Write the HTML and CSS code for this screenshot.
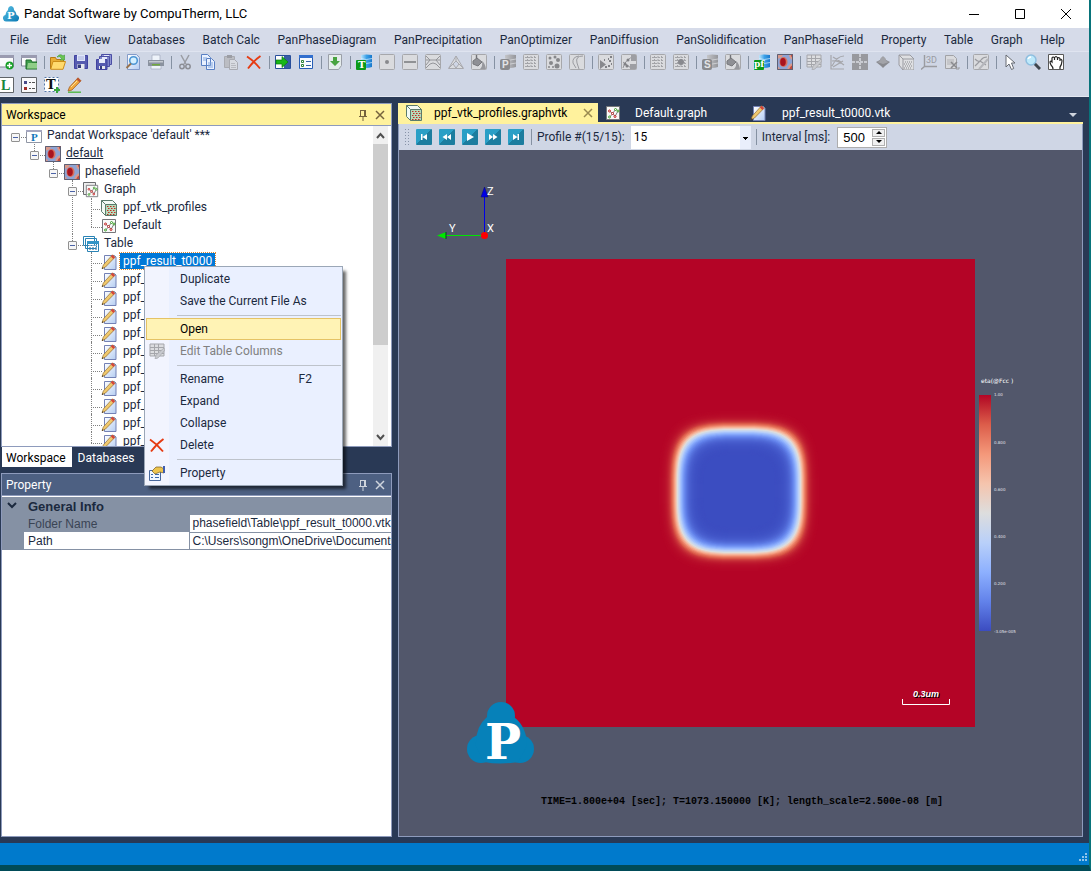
FILE: index.html
```html
<!DOCTYPE html>
<html lang="en">
<head>
<meta charset="utf-8">
<title>Pandat Software by CompuTherm, LLC</title>
<link rel="stylesheet" href="styles.css">
</head>
<body>
<svg class="defs" aria-hidden="true">
  <defs>
    <linearGradient id="gLogo" x2="1" y2="1"><stop offset="0" stop-color="#5cc0e4"/><stop offset="1" stop-color="#0879b4"/></linearGradient>
    <linearGradient id="gDb"><stop offset="0" stop-color="#bfe6fb"/><stop offset=".5" stop-color="#3aa0e8"/><stop offset="1" stop-color="#1878cc"/></linearGradient>
    <linearGradient id="gDbOff"><stop offset="0" stop-color="#c4c5c9"/><stop offset="1" stop-color="#95969b"/></linearGradient>
    <linearGradient id="gPage" x2="1" y2="1"><stop offset="0" stop-color="#fff"/><stop offset="1" stop-color="#b4cdf2"/></linearGradient>
    <linearGradient id="gPen" x2="1" y2="1"><stop offset="0" stop-color="#fff0a8"/><stop offset="1" stop-color="#e0a030"/></linearGradient>
  </defs>
  <symbol id="i-logo" viewBox="0 0 16 16"><path d="M8 0a4 4 0 0 1 3 4q2.500 2 2.600 5a3.300 3.300 0 0 1-1.600 6.400H4A3.300 3.300 0 0 1 2.400 9Q2.500 6 5 4a4 4 0 0 1 3-4z" fill="url(#gLogo)"/></symbol>
  <symbol id="i-newgraph" viewBox="0 0 16 16"><path d="M0 1.500h15.500V13H0z" fill="#fafbfc" stroke="#85879a"/><path d="M0 1h16v3H0z" fill="#9a9bb0"/><circle cx="11.500" cy="11.500" r="4" fill="#19a028"/><path d="M11.500 9v5M9 11.500h5" stroke="#fff" stroke-width="1.400"/></symbol>
  <symbol id="i-newfolder" viewBox="0 0 16 16"><path d="M.5 1.500h14.800V12H.5z" fill="#fafbfc" stroke="#85879a"/><path d="M0 1h16v3H0z" fill="#9a9bb0"/><path d="M5 6h5l1 2h5v7H5z" fill="#3f9c4b" stroke="#1e6c2b"/><path d="M7 9h9v5.500H6z" fill="#8fce88"/></symbol>
  <symbol id="i-open" viewBox="0 0 16 16"><path d="M.5 15V3.500h5l1 2h7V8" fill="#e8ad35" stroke="#b67a16"/><path d="M.7 15.300 3 7.500h12.500L13 15.300z" fill="#ffda6e" stroke="#cc8d19"/><path d="M7 3Q10-1 13 2l1.500-1v5H10l1.500-1.500Q10 1.500 7 3z" fill="#6bc552" stroke="#3c9b34" stroke-width=".6"/></symbol>
  <symbol id="i-save" viewBox="0 0 16 16"><path d="M1.500 1.500h13v13h-13z" fill="#565bb0" stroke="#4143a0"/><path d="M4 1h8v6H4z" fill="#dfe5fb"/><path d="M5 3h6M5 5h6" stroke="#a7b0da"/><path d="M4.500 10h7v5h-7z" fill="#e6e8ec"/><path d="M5 10.500h3V14H5z" fill="#353c80"/></symbol>
  <symbol id="i-saveall" viewBox="0 0 16 16"><path d="M5.500.5h10v10h-10z" fill="#8f95d2" stroke="#4b4ea5"/><path d="M8 1h5v3H8z" fill="#e4e8fa"/><path d="M3.500 2.500h10v10h-10z" fill="#7f86ca" stroke="#4b4ea5"/><path d="M6 3h5v3H6z" fill="#e4e8fa"/><path d="M.5 5.500h10.500v10H.5z" fill="#565bb0" stroke="#4143a0"/><path d="M3 5h6v4H3z" fill="#e8ecfb"/><path d="M3 12h6v3H3z" fill="#e6e8ec"/><path d="M4 12h2v3H4z" fill="#353c80"/></symbol>
  <symbol id="i-preview" viewBox="0 0 16 16"><path d="M2.500.5h9l3 3v12h-12z" fill="url(#gPage)" stroke="#839bc9"/><circle cx="8.500" cy="6.500" r="3.800" fill="#d5f0ff" stroke="#4d96d4" stroke-width="1.600"/><path d="M6 9.500 1.500 14" stroke="#98724c" stroke-width="2"/></symbol>
  <symbol id="i-print" viewBox="0 0 16 16"><path d="M4 1h8v6H4zM3 10h10v5H3z" fill="#eef3fa" stroke="#a0aabb" stroke-width=".7"/><path d="M0 6h16v6H0z" fill="#8a929f"/><path d="M1 7h14v1.500H1z" fill="#c4c9d0"/><path d="M4 10h8v1.500H4z" fill="#71a83e"/></symbol>
  <symbol id="i-cut" viewBox="0 0 16 16"><path d="M4 1l5 9M12 1 7 10" stroke="#9a9ca3" stroke-width="1.500"/><circle cx="5" cy="12.500" r="2.200" fill="none" stroke="#8c8e95" stroke-width="1.500"/><circle cx="11" cy="12.500" r="2.200" fill="none" stroke="#8c8e95" stroke-width="1.500"/></symbol>
  <symbol id="i-copy" viewBox="0 0 16 16"><path d="M1.500.5h6l3 3v8h-9zM6.500 4.500h5l3 3v8h-8z" fill="#e9f1ff" stroke="#5980c4"/><path d="M3 4h4M3 6h3M8 9h5M8 11h5M8 13h5" stroke="#82a6dd"/></symbol>
  <symbol id="i-paste" viewBox="0 0 16 16"><path d="M1.500 2.500h10v11h-10z" fill="#bbbdc3" stroke="#a8aab1"/><path d="M4 1h5v3H4z" fill="#9b9da4"/><path d="M6.500 5.500h5l3 3v7h-8z" fill="#d8dbe1" stroke="#a8aab1"/><path d="M8 9.500h4M8 11.500h5M8 13.500h5" stroke="#b8bac0"/></symbol>
  <symbol id="i-delete" viewBox="0 0 16 16"><path d="M1 2.500Q8 7 14 14.500M14.500 2Q8 6.500 2 14.500" fill="none" stroke="#e63b12" stroke-width="1.900"/></symbol>
  <symbol id="i-run" viewBox="0 0 16 16"><path d="M.5 1.500h15v13H.5z" fill="#fff" stroke="#294f9b"/><path d="M9 2h6v12H9z" fill="#365ea4"/><path d="M1 6h6V2.500L13 8l-6 5.500V10H1z" fill="#18b718" stroke="#087c0b" stroke-width=".7"/></symbol>
  <symbol id="i-props" viewBox="0 0 16 16"><path d="M1.500 1.500h13v13h-13z" fill="#f7faff" stroke="#255db6"/><path d="M1 1h14v3H1z" fill="#326fce"/><path d="M3.500 6.500h2v2h-2zM3.500 10.500h2v2h-2z" fill="#fff" stroke="#2b8137"/><path d="M8 7.500h5M8 11.500h5" stroke="#3464a7"/></symbol>
  <symbol id="i-import" viewBox="0 0 16 16"><path d="M1.500.5h13v11l-3 4h-10z" fill="#e5ecec" stroke="#9a9fa8"/><path d="M6 3h4v4h3l-5 5-5-5h3z" fill="#48a340"/></symbol>
  <symbol id="i-db" viewBox="0 0 16 16"><path d="M5 1q5-1 11 0v12q-6 2-11 0z" fill="url(#gDb)"/><path d="M5 4.500q5 2 11 0M5 8.500q5 2 11 0" fill="none" stroke="#d7f1ff" stroke-width=".7"/><rect y="6" width="10" height="10" rx="1" fill="#0a9a17"/></symbol>
  <symbol id="i-dboff" viewBox="0 0 16 16"><path d="M5 1q5-1 11 0v12q-6 2-11 0z" fill="url(#gDbOff)"/><path d="M5 5q5 2 11 0M5 9q5 2 11 0" fill="none" stroke="#dedfe3" stroke-width=".7"/><rect y="5" width="10" height="11" rx="2" fill="#898a8e"/></symbol>
  <symbol id="i-frame" viewBox="0 0 16 16"><rect x=".5" y=".5" width="15" height="15" rx="1" fill="#dadbde" stroke="#a6a7ab"/></symbol>
  <symbol id="i-point" viewBox="0 0 16 16"><use href="#i-frame"/><circle cx="8" cy="8" r="2" fill="#88898d"/></symbol>
  <symbol id="i-line" viewBox="0 0 16 16"><use href="#i-frame"/><path d="M2 8h12" stroke="#88898d" stroke-width="1.800"/></symbol>
  <symbol id="i-section" viewBox="0 0 16 16"><use href="#i-frame"/><path d="M1 2 5 6h6l4-4M1 6l4 0-4 5M15 6h-4l4 5M1 14l4-4q3-2 6 0l4 4" fill="none" stroke="#94959a"/></symbol>
  <symbol id="i-tri" viewBox="0 0 16 16"><path d="M8 2 15.500 14.500H.5zM8 2v5L5 10l3 4 3-4-3-3M5 10l-4 4M11 10l4 4" fill="#d9dbdf" stroke="#a8a9ae"/></symbol>
  <symbol id="i-bucket" viewBox="0 0 16 16"><use href="#i-frame"/><path d="M5.500 1v6" stroke="#707176" stroke-width="1.400"/><path d="M2 7l4-3 5 4-4 4-5-2z" fill="#8f9095" stroke="#77787c"/><path d="M11 7q3 2 4 8H9q3-3 2-8z" fill="#97989d"/></symbol>
  <symbol id="i-grid" viewBox="0 0 16 16"><use href="#i-frame"/><path d="M2 3.500h12M2 6.500h12M2 9.500h12M2 12.500h12M4.500 2v12M8 2v12M11.500 2v12" stroke="#a3a4a8" stroke-dasharray="2 1"/></symbol>
  <symbol id="i-dots" viewBox="0 0 16 16"><use href="#i-frame"/><g fill="#86878b"><circle cx="4" cy="4" r="1.500"/><circle cx="9" cy="3" r="1.500"/><circle cx="12" cy="6" r="2"/><circle cx="5" cy="9" r="2"/><circle cx="11" cy="12" r="2.500"/><circle cx="3" cy="13" r="1"/><circle cx="7" cy="13" r="1"/></g></symbol>
  <symbol id="i-contour" viewBox="0 0 16 16"><use href="#i-frame"/><path d="M14 2Q6 2 8 9l2 6M10 2Q3 3 4 9l3 5" fill="none" stroke="#9a9ba0"/></symbol>
  <symbol id="i-scatter" viewBox="0 0 16 16"><use href="#i-frame"/><path d="M2 6l6 4.500-6 4.500z" fill="#88898d"/><path d="M12 3h2M10 5h1M6 6h1M11 7h2M13 10h1M10 12h2M7 13h2" stroke="#808186" stroke-width="2"/></symbol>
  <symbol id="i-mesh" viewBox="0 0 16 16"><use href="#i-frame"/><path d="M2 14Q4 5 14 2M2 8l8 6" stroke="#909196" fill="none"/><path d="M10 1h5v6h-5zM9 10h6v5H9z" fill="#9d9ea3"/><g fill="#808185"><circle cx="4" cy="10" r="1.500"/><circle cx="7" cy="6" r="1.500"/><circle cx="6" cy="12" r="1.500"/></g></symbol>
  <symbol id="i-gridspot" viewBox="0 0 16 16"><use href="#i-grid"/><circle cx="8" cy="8" r="3" fill="#88898e"/></symbol>
  <symbol id="i-phase" viewBox="0 0 16 16"><path d="M0 0h16v16H0z" fill="#8fa4d4"/><path d="M0 0h6Q6 4 0 5zM12 0h4v6q-4-1-4-6zM16 9v7h-6q1-6 6-7zM0 12q3 1 3 4H0z" fill="#d99a8c"/><path d="M13.500 0H16v4q-2-1-2.500-4zM16 11v5h-4q1-4 4-5z" fill="#c24a3c"/><ellipse cx="6.500" cy="8" rx="4" ry="5" fill="#d9705c"/><ellipse cx="6" cy="8" rx="2.800" ry="4" fill="#a81420"/><path d="M.5.500h15v15H.5z" fill="none" stroke="#5c6076"/></symbol>
  <symbol id="i-tableedit" viewBox="0 0 16 16"><path d="M1 1h14v12H1z" fill="#dcdde0" stroke="#a5a6ab"/><path d="M1 4.500h14M1 7.500h14M1 10.500h14M5.500 1v12M9.500 1v12" stroke="#a5a6ab"/><path d="M15 5l1 2-7 8-3 1 1-4z" fill="#c8c9ce" stroke="#a0a1a6" stroke-width=".6"/></symbol>
  <symbol id="i-curves" viewBox="0 0 16 16"><path d="M2 1v14h13M3 12Q8 2 15 2M3 7q6-1 12 4M4 3l8 5M4 13 14 7" fill="none" stroke="#a5a6ab" stroke-width="1.200"/></symbol>
  <symbol id="i-quad" viewBox="0 0 16 16"><path d="M0 0h16v16H0z" fill="#98999e"/><path d="M8 0v16M0 8h16" stroke="#c9cbd1" stroke-width="2" stroke-dasharray="3 1"/></symbol>
  <symbol id="i-surface" viewBox="0 0 16 16"><path d="M1 8 5 6l3-4 3 4 4 2-5 4-2 2-2-2z" fill="#898a8f"/><path d="M5 7q0-4 3-4t3 4l3 1-6 2-6-2z" fill="#a3a4a9"/></symbol>
  <symbol id="i-cubeoff" viewBox="0 0 16 16"><path d="M1 1h11l4 4v11H5l-4-5z" fill="#dedfe2" stroke="#999aa0"/><path d="M1 1l4 4h11M5 5v11" fill="none" stroke="#999aa0"/><path d="M7 8h8M6 10h8M7 12h8M6 14h8" stroke="#888a8e" stroke-dasharray="1 1"/></symbol>
  <symbol id="i-axes3d" viewBox="0 0 16 16"><path d="M3.500 1v11.500H16M3.500 12.500 0 15.500" fill="none" stroke="#9a9ba0" stroke-width="1.400"/></symbol>
  <symbol id="i-docx" viewBox="0 0 16 16"><path d="M1.500 1.500h8l3 3v10h-11z" fill="#d9dadd" stroke="#a1a2a6"/><path d="M3 6h7M3 8h7M3 10h5" stroke="#b0b1b5"/><path d="M7 8l6 6M13 8l-6 6" stroke="#898a8e" stroke-width="1.600"/><path d="M15 13v2h-3" fill="none" stroke="#97989b"/></symbol>
  <symbol id="i-graphedit" viewBox="0 0 16 16"><use href="#i-frame"/><path d="M2 5q4 4 6 1t6-3M2 12l5-5 6 4" fill="none" stroke="#9a9ba0" stroke-width="1.200"/><path d="M15 5 8 13l-2 2" stroke="#b5b6bb" stroke-width="2"/></symbol>
  <symbol id="i-cursor" viewBox="0 0 16 16"><path d="M4 1v12l3-3 2.500 5.500 2.200-1L9.500 9H13z" fill="#fff" stroke="#666a72"/></symbol>
  <symbol id="i-zoom" viewBox="0 0 16 16"><path d="M9.500 9.500l5.500 5.500" stroke="#3f464e" stroke-width="3"/><circle cx="6" cy="6" r="5" fill="#bde9fb" stroke="#8ebedf" stroke-width="1.500"/><path d="M3 5q1-2 3-2" stroke="#fff" stroke-width="1.500" fill="none"/></symbol>
  <symbol id="i-hand" viewBox="0 0 16 16"><path d="M.5.500h15v15H.5z" fill="#fff" stroke="#585858"/><path d="M5 15q0-2-2-4Q1 7 3 7l1 1V4q1-2 2.500 0Q8 1 9.500 4q2-1 2.500 1 2 0 2 2-.3 4-2 6v2M6.500 4v2M9.500 4v2M12 5v2" fill="none" stroke="#222" stroke-width="1.200"/></symbol>
  <symbol id="i-l" viewBox="0 0 16 16"><path d="M.5.500h15v15H.5z" fill="#fff" stroke="#606469"/></symbol>
  <symbol id="i-legend" viewBox="0 0 16 16"><path d="M.5.500h15v15H.5z" fill="#f9f9fb" stroke="#606469"/><path d="M3 4h3v3H3z" fill="#494b89"/><path d="M3 10h3v3H3z" fill="#a12c27"/><path d="M8 5.500h2M11 5.500h3M8 11.500h2M11 11.500h3" stroke="#555"/></symbol>
  <symbol id="i-text" viewBox="0 0 16 16"><path d="M.5.500h14v14H.5z" fill="#fff" stroke="#5579aa" stroke-dasharray="2 2"/><path d="M13 10v6M10 13h6" stroke="#35a43d" stroke-width="2"/></symbol>
  <symbol id="i-pencil" viewBox="0 0 16 16"><path d="M1 15.200h13" stroke="#51b745" stroke-width="1.400"/><path d="M11 .8l3 3L5 13l-4 1 1.500-4z" fill="#f0a83c" stroke="#a35f26" stroke-width=".8"/><path d="M11 .8l3 3-1.500 1.500L9.500 2.300z" fill="#bd5234"/><path d="M4 10l6-6" stroke="#fde09a"/></symbol>
  <symbol id="i-note" viewBox="0 0 16 16"><path d="M3.500 1.500h10l1.500 1.500v12.500H3.500z" fill="url(#gPage)" stroke="#7381b5"/><path d="M11.500.8l2.500 2.500L4.500 13 1 14.700 2.300 11z" fill="url(#gPen)" stroke="#8f6b32" stroke-width=".7"/><path d="M11.500.8l2.500 2.500-1.700 1.700L9.800 2.500z" fill="#d5463c"/><path d="M1 14.700l.5-1.500 1 1z" fill="#111"/></symbol>
  <symbol id="i-cube" viewBox="0 0 16 16"><path d="M.5.500h11l4 4v11h-11l-4-4z" fill="#f2faf4" stroke="#5b7b6b"/><path d="M.5.500l4 4h11M4.500 4.500v11" fill="none" stroke="#5b7b6b"/><path d="M5 5h10v10H5z" fill="#b6dcba"/><path d="M6 6.500h9M7 8.500h8M6 10.500h9M7 12.500h8M6 14.500h9" stroke="#c22b22" stroke-dasharray="1.500 1.500"/></symbol>
  <symbol id="i-graph" viewBox="0 0 16 16"><path d="M1.500 1.500h13v13h-13z" fill="#f9f9f9" stroke="#75777a"/><path d="M4.500 12 8 8.500l2 3 3-5.500M4.500 6l3 2.500L11 4" fill="none" stroke="#222" stroke-width=".6"/><g fill="#fff" stroke-width="1"><g stroke="#c32020"><circle cx="4.500" cy="6" r="1"/><circle cx="7.500" cy="8.500" r="1"/><circle cx="10" cy="11.500" r="1"/></g><g stroke="#3b9e29"><circle cx="4.500" cy="12" r="1"/><circle cx="10.500" cy="4.500" r="1"/><circle cx="13" cy="6" r="1"/></g></g></symbol>
  <symbol id="i-graphs" viewBox="0 0 16 16"><path d="M.5.500h12v12H.5z" fill="#eee" stroke="#6b6d70"/><use href="#i-graph" x="2" y="2" width="14" height="14"/></symbol>
  <symbol id="i-tables" viewBox="0 0 16 16"><path d="M.5.500h11v9H.5zM2.500 2.500h11v10h-11zM4.500 5.500h11v10h-11z" fill="#fff" stroke="#2a83b5"/><path d="M4 5h12v3H4z" fill="#3294c6"/><path d="M6 9.500h9M6 11.500h9M6 13.500h9" stroke="#8fb0c8" stroke-dasharray="2 1"/></symbol>
  <symbol id="i-workspace" viewBox="0 0 16 16"><path d="M.5 2.500h15v12H.5z" fill="#fff" stroke="#9096a5"/><path d="M0 2h16v2H0z" fill="#a5a7c0"/></symbol>
  <symbol id="i-propsheet" viewBox="0 0 16 16"><path d="M.5 5.500h11v10H.5z" fill="#f1f7ff" stroke="#48679b"/><path d="M2 9.500h2M2 12.500h2M6 9.500h4M6 12.500h4" stroke="#3c68ab"/><path d="M3 6l4-4h5l3 2v4l-4-1-5 2z" fill="#edc44e" stroke="#735a22" stroke-width=".7"/><path d="M14 1h2v7h-2z" fill="#3f5daf"/></symbol>
  <symbol id="i-pin" viewBox="0 0 10 12"><path d="M2.500 1v6M7.500 1v6M2.500 1.500h5M1 7.500h8M5 8v4M6.500 1v6" fill="none" stroke="currentColor"/></symbol>
  <symbol id="i-x" viewBox="0 0 10 10"><path d="M1 1l8 8M9 1l-8 8" stroke="currentColor" stroke-width="1.500"/></symbol>
  <symbol id="i-first" viewBox="0 0 16 16"><path d="M5 5h1.500v6H5zM11 5v6L6.500 8z" fill="#fff"/></symbol>
  <symbol id="i-rew" viewBox="0 0 16 16"><path d="M8 5v6L3.500 8zM12 5v6L8 8z" fill="#fff"/></symbol>
  <symbol id="i-play" viewBox="0 0 16 16"><path d="M5 4l7 4-7 4z" fill="#fff"/></symbol>
  <symbol id="i-fwd" viewBox="0 0 16 16"><path d="M4 5v6l4-3zM8 5v6l4.500-3z" fill="#fff"/></symbol>
  <symbol id="i-last" viewBox="0 0 16 16"><path d="M9.500 5H11v6H9.500zM5 5v6l4.500-3z" fill="#fff"/></symbol>
</svg>

<div class="app">
  <header class="titlebar">
    <svg class="ico" viewBox="0 0 16 16"><use href="#i-logo"/><text class="logo-p" x="4" y="13">P</text></svg>
    <h1>Pandat Software by CompuTherm, LLC</h1>
    <div class="winbtns">
      <button aria-label="Minimize"><svg viewBox="0 0 12 12"><path d="M1 6.500h10" stroke="#000"/></svg></button>
      <button aria-label="Maximize"><svg viewBox="0 0 12 12"><path d="M1.500 1.500h9v9h-9z" fill="none" stroke="#000"/></svg></button>
      <button aria-label="Close"><svg viewBox="0 0 12 12"><path d="M1 1l10 10M11 1 1 11" stroke="#000"/></svg></button>
    </div>
  </header>

  <nav class="menubar">
    <button>File</button><button>Edit</button><button>View</button><button>Databases</button><button>Batch Calc</button><button>PanPhaseDiagram</button><button>PanPrecipitation</button><button>PanOptimizer</button><button>PanDiffusion</button><button>PanSolidification</button><button>PanPhaseField</button><button>Property</button><button>Table</button><button>Graph</button><button>Help</button>
  </nav>

  <div class="toolbars">
    <div class="toolbar">
      <button aria-label="New graph"><svg><use href="#i-newgraph"/></svg></button>
      <button aria-label="New workspace"><svg><use href="#i-newfolder"/></svg></button>
      <i class="sep"></i>
      <button aria-label="Open"><svg><use href="#i-open"/></svg></button>
      <button aria-label="Save"><svg><use href="#i-save"/></svg></button>
      <button aria-label="Save all"><svg><use href="#i-saveall"/></svg></button>
      <i class="sep"></i>
      <button aria-label="Print preview"><svg><use href="#i-preview"/></svg></button>
      <button aria-label="Print"><svg><use href="#i-print"/></svg></button>
      <i class="sep"></i>
      <button aria-label="Cut"><svg><use href="#i-cut"/></svg></button>
      <button aria-label="Copy"><svg><use href="#i-copy"/></svg></button>
      <button aria-label="Paste"><svg><use href="#i-paste"/></svg></button>
      <button aria-label="Delete"><svg><use href="#i-delete"/></svg></button>
      <i class="sep"></i>
      <button aria-label="Run"><svg><use href="#i-run"/></svg></button>
      <button aria-label="Options"><svg><use href="#i-props"/></svg></button>
      <i class="sep"></i>
      <button aria-label="Import"><svg><use href="#i-import"/></svg></button>
      <i class="sep"></i>
      <button aria-label="Load database"><svg viewBox="0 0 16 16"><use href="#i-db"/><text class="badge" x="2" y="14">T</text></svg></button>
      <button aria-label="Point calculation"><svg><use href="#i-point"/></svg></button>
      <button aria-label="Line calculation"><svg><use href="#i-line"/></svg></button>
      <button aria-label="Section calculation"><svg><use href="#i-section"/></svg></button>
      <button aria-label="Liquidus projection"><svg><use href="#i-tri"/></svg></button>
      <button aria-label="Solidification"><svg><use href="#i-bucket"/></svg></button>
      <i class="sep"></i>
      <button aria-label="Precipitation database"><svg viewBox="0 0 16 16"><use href="#i-dboff"/><text class="badge-off" x="2" y="14">P</text></svg></button>
      <button aria-label="Precipitation grid"><svg><use href="#i-grid"/></svg></button>
      <button aria-label="Precipitation simulation"><svg><use href="#i-dots"/></svg></button>
      <button aria-label="TTT simulation"><svg><use href="#i-contour"/></svg></button>
      <i class="sep"></i>
      <button aria-label="Optimizer"><svg><use href="#i-scatter"/></svg></button>
      <button aria-label="Optimizer results"><svg><use href="#i-mesh"/></svg></button>
      <i class="sep"></i>
      <button aria-label="Diffusion"><svg><use href="#i-grid"/></svg></button>
      <button aria-label="Diffusion spot"><svg><use href="#i-gridspot"/></svg></button>
      <i class="sep"></i>
      <button aria-label="Solidification database"><svg viewBox="0 0 16 16"><use href="#i-dboff"/><text class="badge-off" x="2" y="14">S</text></svg></button>
      <button aria-label="Solidification simulation"><svg><use href="#i-bucket"/></svg></button>
      <i class="sep"></i>
      <button aria-label="Phase field database"><svg viewBox="0 0 16 16"><use href="#i-db"/><text class="badge small" x="0" y="13">pf</text></svg></button>
      <button aria-label="Phase field simulation"><svg><use href="#i-phase"/></svg></button>
      <i class="sep"></i>
      <button aria-label="Edit table"><svg><use href="#i-tableedit"/></svg></button>
      <button aria-label="Plot curves"><svg><use href="#i-curves"/></svg></button>
      <button aria-label="Tile plots"><svg><use href="#i-quad"/></svg></button>
      <button aria-label="Surface plot"><svg><use href="#i-surface"/></svg></button>
      <button aria-label="Cube plot"><svg><use href="#i-cubeoff"/></svg></button>
      <button aria-label="3D plot"><svg viewBox="0 0 16 16"><use href="#i-axes3d"/><text class="t3d" x="5" y="9">3D</text></svg></button>
      <button aria-label="Export to Excel"><svg><use href="#i-docx"/></svg></button>
      <i class="sep"></i>
      <button aria-label="Edit graph"><svg><use href="#i-graphedit"/></svg></button>
      <i class="sep"></i>
      <button aria-label="Select"><svg><use href="#i-cursor"/></svg></button>
      <button aria-label="Zoom"><svg><use href="#i-zoom"/></svg></button>
      <button aria-label="Pan"><svg><use href="#i-hand"/></svg></button>
    </div>
    <div class="toolbar">
      <button aria-label="Label"><svg viewBox="0 0 16 16"><use href="#i-l"/><text class="tl" x="3" y="13">L</text></svg></button>
      <button aria-label="Legend"><svg><use href="#i-legend"/></svg></button>
      <button aria-label="Add text"><svg viewBox="0 0 16 16"><use href="#i-text"/><text class="tt" x="2" y="12">T</text></svg></button>
      <button aria-label="Draw line"><svg><use href="#i-pencil"/></svg></button>
    </div>
  </div>

  <main class="body">
    <aside class="left">
      <section class="panel workspace">
        <div class="panel-head active"><h2>Workspace</h2><button class="pin" aria-label="Pin"><svg><use href="#i-pin"/></svg></button><button class="close" aria-label="Close"><svg><use href="#i-x"/></svg></button></div>
        <div class="treebox">
          <ul class="tree">
            <li><div class="row"><button class="exp" aria-label="Collapse"></button><svg class="ico" viewBox="0 0 16 16"><use href="#i-workspace"/><text class="ws-p" x="5" y="13">P</text></svg><span>Pandat Workspace 'default' ***</span></div>
              <ul><li><div class="row"><button class="exp" aria-label="Collapse"></button><svg class="ico"><use href="#i-phase"/></svg><span class="current">default</span></div>
                <ul><li><div class="row"><button class="exp" aria-label="Collapse"></button><svg class="ico"><use href="#i-phase"/></svg><span>phasefield</span></div>
                  <ul>
                    <li><div class="row"><button class="exp" aria-label="Collapse"></button><svg class="ico"><use href="#i-graphs"/></svg><span>Graph</span></div>
                      <ul>
                        <li><div class="row leaf"><svg class="ico"><use href="#i-cube"/></svg><span>ppf_vtk_profiles</span></div></li>
                        <li><div class="row leaf"><svg class="ico"><use href="#i-graph"/></svg><span>Default</span></div></li>
                      </ul></li>
                    <li><div class="row"><button class="exp" aria-label="Collapse"></button><svg class="ico"><use href="#i-tables"/></svg><span>Table</span></div>
                      <ul>
                        <li><div class="row leaf"><svg class="ico"><use href="#i-note"/></svg><span class="selected">ppf_result_t0000</span></div></li>
                        <li><div class="row leaf"><svg class="ico"><use href="#i-note"/></svg><span>ppf_</span></div></li>
                        <li><div class="row leaf"><svg class="ico"><use href="#i-note"/></svg><span>ppf_</span></div></li>
                        <li><div class="row leaf"><svg class="ico"><use href="#i-note"/></svg><span>ppf_</span></div></li>
                        <li><div class="row leaf"><svg class="ico"><use href="#i-note"/></svg><span>ppf_</span></div></li>
                        <li><div class="row leaf"><svg class="ico"><use href="#i-note"/></svg><span>ppf_</span></div></li>
                        <li><div class="row leaf"><svg class="ico"><use href="#i-note"/></svg><span>ppf_</span></div></li>
                        <li><div class="row leaf"><svg class="ico"><use href="#i-note"/></svg><span>ppf_</span></div></li>
                        <li><div class="row leaf"><svg class="ico"><use href="#i-note"/></svg><span>ppf_</span></div></li>
                        <li><div class="row leaf"><svg class="ico"><use href="#i-note"/></svg><span>ppf_</span></div></li>
                        <li><div class="row leaf"><svg class="ico"><use href="#i-note"/></svg><span>ppf_</span></div></li>
                      </ul></li>
                  </ul></li></ul></li></ul></li>
          </ul>
          <div class="scroll"><svg viewBox="0 0 15 16"><path d="M4 10l3.500-4 3.500 4" fill="none" stroke="#505050" stroke-width="2"/></svg><div class="thumb"></div><svg viewBox="0 0 15 16"><path d="M4 6l3.500 4L11 6" fill="none" stroke="#505050" stroke-width="2"/></svg></div>
        </div>
      </section>
      <div class="docktabs"><button class="on">Workspace</button><button>Databases</button></div>

      <section class="panel property">
        <div class="panel-head"><h2>Property</h2><button class="pin" aria-label="Pin"><svg><use href="#i-pin"/></svg></button><button class="close" aria-label="Close"><svg><use href="#i-x"/></svg></button></div>
        <table class="grid">
          <colgroup><col class="c-gut"><col class="c-key"><col></colgroup>
          <tr class="group"><td class="gut"><svg viewBox="0 0 16 16"><path d="M4 5l4 4 4-4" fill="none" stroke="#1b293e" stroke-width="2"/></svg></td><th colspan="2">General Info</th></tr>
          <tr><td class="gut"></td><td class="key dim">Folder Name</td><td class="val">phasefield\Table\ppf_result_t0000.vtk</td></tr>
          <tr><td class="gut"></td><td class="key">Path</td><td class="val">C:\Users\songm\OneDrive\Documents</td></tr>
        </table>
      </section>

      <div class="ctx" role="menu">
        <button role="menuitem"><i></i><span>Duplicate</span></button>
        <button role="menuitem"><i></i><span>Save the Current File As</span></button>
        <hr>
        <button role="menuitem" class="hot"><i></i><span>Open</span></button>
        <button role="menuitem" disabled><i><svg><use href="#i-tableedit"/></svg></i><span>Edit Table Columns</span></button>
        <hr>
        <button role="menuitem"><i></i><span>Rename</span><kbd>F2</kbd></button>
        <button role="menuitem"><i></i><span>Expand</span></button>
        <button role="menuitem"><i></i><span>Collapse</span></button>
        <button role="menuitem"><i><svg><use href="#i-delete"/></svg></i><span>Delete</span></button>
        <hr>
        <button role="menuitem"><i><svg><use href="#i-propsheet"/></svg></i><span>Property</span></button>
      </div>
    </aside>

    <section class="doc">
      <div class="doctabs">
        <div class="tab on"><svg class="ico"><use href="#i-cube"/></svg><button>ppf_vtk_profiles.graphvtk</button><button class="close" aria-label="Close tab"><svg><use href="#i-x"/></svg></button></div>
        <div class="tab"><svg class="ico"><use href="#i-graph"/></svg><button>Default.graph</button></div>
        <div class="tab last"><svg class="ico"><use href="#i-note"/></svg><button>ppf_result_t0000.vtk</button></div>
        <button class="more" aria-label="More tabs"><svg viewBox="0 0 8 4"><path d="M0 0h8L4 4z" fill="#ced4dd"/></svg></button>
      </div>
      <div class="docbox">
        <div class="player">
          <i class="grip"></i>
          <button class="pl" aria-label="First"><svg><use href="#i-first"/></svg></button>
          <button class="pl" aria-label="Previous"><svg><use href="#i-rew"/></svg></button>
          <button class="pl" aria-label="Play"><svg><use href="#i-play"/></svg></button>
          <button class="pl" aria-label="Next"><svg><use href="#i-fwd"/></svg></button>
          <button class="pl" aria-label="Last"><svg><use href="#i-last"/></svg></button>
          <i class="sep"></i>
          <label for="profile">Profile #(15/15):</label>
          <select id="profile"><option>15</option></select>
          <i class="sep"></i>
          <label for="interval">Interval [ms]:</label>
          <div class="spin"><input id="interval" type="text" value="500"><div><button aria-label="Increase"><svg viewBox="0 0 6 3"><path d="M0 3h6L3 0z"/></svg></button><button aria-label="Decrease"><svg viewBox="0 0 6 3"><path d="M0 0h6L3 3z"/></svg></button></div></div>
        </div>
        <svg class="scene" viewBox="0 0 683 686" role="img" aria-label="Phase field result">
          <defs><linearGradient id="bar" x2="0" y2="1"><stop offset="0" stop-color="#b40426"/><stop offset=".03" stop-color="#bb1b2c"/><stop offset=".125" stop-color="#dc5d4a"/><stop offset=".25" stop-color="#f4987a"/><stop offset=".375" stop-color="#f5c4ad"/><stop offset=".5" stop-color="#dddddd"/><stop offset=".625" stop-color="#b9d0f9"/><stop offset=".75" stop-color="#8db0fe"/><stop offset=".875" stop-color="#6282ea"/><stop offset="1" stop-color="#3b4cc0"/></linearGradient></defs>
          <g class="axes">
            <path d="M85.500 85V45" stroke="#0000e6"/><path d="M82 47h7l-3.500-10z" fill="#0000e6" stroke="#08086e" stroke-width=".5"/>
            <path d="M85 85.500H46" stroke="#00e600"/><path d="M38 85.500l9-3.500v7z" fill="#00e600"/><path d="M47 82v7" stroke="#042"/>
            <circle cx="85.500" cy="85.500" r="3.500" fill="#f00"/>
            <text x="88" y="45">Z</text><text x="50" y="82">Y</text><text x="88" y="82">X</text>
          </g>
          <rect x="107" y="109" width="469" height="468" fill="#b40426"/>
          <g id="particle" transform="translate(340 341)"></g>
          <text class="lt" x="582" y="233">eta(@Fcc )</text>
          <rect x="580" y="245" width="12" height="236" fill="url(#bar)"/>
          <g class="tick"><text x="595" y="246">1.00</text><text x="595" y="294">0.800</text><text x="595" y="341">0.600</text><text x="595" y="388">0.400</text><text x="595" y="435">0.200</text><text x="595" y="483">-3.05e-005</text></g>
          <text class="scale" x="514" y="547">0.3um</text>
          <path d="M503.500 549v5.500h47V549" fill="none" stroke="#fff"/>
          <g fill="#0681b9"><circle cx="102" cy="566" r="14"/><circle cx="82" cy="599" r="14"/><circle cx="121" cy="599" r="14"/><path d="M88 567Q76 577 77 596l8 16q16 3 34 0l9-16q0-19-13-29z"/></g>
          <text class="biglogo" x="86" y="609">P</text>
          <text class="time" x="142" y="654">TIME=1.800e+04 [sec]; T=1073.150000 [K]; length_scale=2.500e-08 [m]</text>
        </svg>
      </div>
    </section>
  </main>
  <footer class="status"><svg viewBox="0 0 10 10"><path d="M8 0h2v2H8zM5 3h2v2H5zM8 3h2v2H8zM2 6h2v2H2zM5 6h2v2H5zM8 6h2v2H8z" fill="#8fc4ea"/></svg></footer>
</div>
<script src="scene.js"></script>
</body>
</html>
```
FILE: styles.css
```css
* { box-sizing: border-box; }
body { margin: 0; background: #004b58; color: #1b293e; font: 12px/18px Roboto, "Noto Sans", sans-serif; }
button, input, select { font: inherit; color: inherit; margin: 0; padding: 0; border: 0; background: none; white-space: nowrap; }
h1, h2 { margin: 0; font-size: 12px; font-weight: 400; white-space: nowrap; }
svg { display: block; }
.defs { position: absolute; width: 0; height: 0; }
.ico { width: 16px; height: 16px; flex: none; }
.app { display: flex; flex-direction: column; height: 100vh; min-height: 600px; border-right: 2px solid #08737a; border-bottom: 6px solid #004b58; }

.titlebar { display: flex; align-items: center; height: 28px; padding: 0 17px 0 3px; gap: 5px; background: #fff; color: #000; flex: none; }
.titlebar h1 { font-size: 13px; }
.winbtns { display: flex; gap: 34px; margin-left: auto; }
.winbtns svg { width: 12px; height: 12px; }
.menubar { display: flex; justify-content: space-between; height: 23px; padding: 0 24px 0 10px; background: #d6dbe9; flex: none; }
.toolbars { height: 46px; border-top: 1px solid #dfe4f0; border-bottom: 1px solid #e4e8f1; background: #cfd6e5; overflow: hidden; flex: none; padding-top: 2px; }
.toolbar { display: flex; gap: 7px; height: 23px; margin-left: -2px; }
.toolbar button, .toolbar svg { width: 16px; height: 16px; flex: none; }
.sep { width: 1px; height: 16px; background: #8591a2; flex: none; }
.toolbar .sep { height: 13px; margin: 2px -2px 0 0; }
.badge { font: 700 10px "DejaVu Serif", serif; fill: #fff; }
.badge.small { font-size: 9px; }
.badge-off { font: 700 10px "Liberation Sans", sans-serif; fill: #e2e3e6; }
.logo-p { font: 700 10px "DejaVu Serif", serif; fill: #fff; }
.ws-p { font: 700 11px "Liberation Serif", serif; fill: #1376ba; }
.tl { font: 700 14px "Liberation Serif", serif; fill: #18873a; }
.tt { font: 700 13px "DejaVu Serif", serif; fill: #111; }
.t3d { font: 9px Roboto, sans-serif; fill: #999ba2; }

.body { flex: 1; display: flex; gap: 6px; min-height: 0; padding: 6px 6px 6px 1px; background: #293955; }
.left { flex: 0 0 391px; display: flex; flex-direction: column; min-height: 0; position: relative; }
.panel { border: 1px solid #8e9bbc; display: flex; flex-direction: column; min-height: 0; }
.workspace { height: 344px; flex: none; }
.panel-head { display: flex; align-items: center; height: 22px; padding: 0 6px 0 4px; background: #4d6082; color: #fff; flex: none; border-bottom: 1px solid #8e9bbc; }
.panel-head.active { background: #fff29d; color: #000; }
.panel-head button { color: #ced4dd; }
.panel-head.active button { color: #75633d; }
.pin { margin-left: auto; }
.pin svg { width: 10px; height: 12px; }
.panel-head .close { margin-left: 7px; }
.close svg { width: 10px; height: 10px; }
.treebox { display: flex; flex: 1; min-height: 0; overflow: hidden; background: #fff; padding-right: 3px; }
.tree { flex: 1; }
.tree, .tree ul { list-style: none; margin: 0; padding: 0; }
.tree ul { padding-left: 19px; }
.tree li { position: relative; }
.tree ul > li::before { content: ""; position: absolute; left: 13px; top: 0; bottom: 0; border-left: 1px dotted #808080; }
.tree ul > li:last-child::before { bottom: auto; height: 11px; }
.row { display: flex; align-items: center; height: 18px; padding-left: 9px; position: relative; white-space: nowrap; }
.row::before { content: ""; position: absolute; left: 13px; top: 11px; width: 11px; border-top: 1px dotted #808080; }
.row .ico { margin: 2px 2px 0 6px; }
.leaf { padding-left: 18px; }
.leaf .ico { margin-left: 5px; margin-right: 3px; }
.row span { padding: 0 3px; line-height: 16px; }
.row .current { text-decoration: underline; }
.row .selected { background: #0078d7; color: #fff; outline: 1px dotted #e08a30; }
.exp { width: 9px; height: 9px; margin-top: 4px; position: relative; border: 1px solid #919191; border-radius: 1px; background: linear-gradient(#4b63a7, #4b63a7) center / 5px 1px no-repeat #f6f6f6; }
.scroll { width: 15px; display: flex; flex-direction: column; padding: 2px 0 1px; background: #f0f0f0; }
.scroll svg { width: 15px; height: 16px; }
.scroll .thumb { height: 201px; background: #cdcdcd; margin-bottom: auto; }
.docktabs { display: flex; height: 20px; margin-bottom: 6px; padding-left: 1px; color: #fff; flex: none; }
.docktabs button { padding: 2px 5px 0 6px; }
.docktabs .on { background: #fff; color: #000; padding: 2px 6px 0 4px; }
.property { flex: 1; background: #fff; }
.grid { border-collapse: collapse; table-layout: fixed; width: 100%; margin-top: 1px; background: #8591a4; font: 12px/16px "Liberation Sans", Arial, sans-serif; }
.c-gut { width: 22px; }
.c-key { width: 165px; }
.grid td, .grid th { padding: 0 0 0 3px; height: 17px; overflow: hidden; white-space: nowrap; }
.grid .group th { height: 18px; font-size: 13px; text-align: left; padding: 1px 0 0 4px; line-height: 17px; }
.grid .gut { padding: 0 0 0 2px; }
.gut svg { width: 16px; height: 16px; }
.grid .key { background: #fff; padding-left: 4px; }
.grid .dim { background: none; color: #3a4454; }
.grid .val { background: #fff; border-left: 1px solid #8591a4; border-bottom: 1px solid #8591a4; }

.ctx { position: absolute; left: 143px; top: 163px; width: 199px; padding: 1px; border: 1px solid #9ba7b7; background: linear-gradient(90deg, #f2f4fe 24px, #eaf0ff 24px); box-shadow: 4px 4px 3px -1px rgba(0, 0, 0, .6); z-index: 2; }
.ctx button { display: flex; align-items: center; width: 100%; height: 22px; text-align: left; border: 1px solid transparent; }
.ctx button i { width: 33px; padding-left: 2px; }
.ctx svg { width: 16px; height: 16px; }
.ctx .hot { background: #fff3b5; border-color: #e5c365; color: #000; }
.ctx button:disabled { color: #808080; }
.ctx kbd { font: inherit; margin-left: auto; padding-right: 28px; }
.ctx hr { height: 1px; border: 0; margin: 3px 0 2px 31px; background: #bec3cb; }

.doc { flex: 1; display: flex; flex-direction: column; min-width: 0; }
.doctabs { display: flex; align-items: center; height: 21px; border-bottom: 2px solid #fff29d; color: #fff; flex: none; }
.tab { display: flex; align-items: center; height: 19px; width: 145px; padding: 0 5px 0 8px; gap: 12px; }
.tab + .tab { padding-left: 7px; gap: 14px; }
.tab.on { width: 200px; background: #fff29d; color: #000; }
.tab.last { width: 160px; gap: 16px; }
.tab .close { margin-left: auto; color: #9a8a50; }
.more { margin-left: auto; padding: 4px 6px 0 0; }
.more svg { width: 8px; height: 4px; }
.docbox { flex: 1; min-height: 0; display: flex; flex-direction: column; border: 1px solid #8e9bbc; border-top: 0; background: #52576b; }
.player { display: flex; align-items: center; height: 26px; padding-left: 5px; gap: 7px; background: #cfd6e5; flex: none; }
.grip { width: 5px; height: 18px; background: radial-gradient(#8793a8 1px, transparent 1px) 0 0 / 3px 3px; }
.pl { background: linear-gradient(135deg, #2a9fc6 50%, #1c7d9f 50%); border-radius: 1px; }
.pl svg { width: 16px; height: 16px; }
.player .sep + label { margin-left: -2px; }
.player label { white-space: nowrap; }
.player select { appearance: none; width: 120px; height: 23px; margin-left: -1px; margin-right: -2px; padding-left: 3px; color: #000; background: linear-gradient(#000, #000) 112px 11px / 5px 1px no-repeat, linear-gradient(#000, #000) 113px 12px / 3px 1px no-repeat, linear-gradient(#000, #000) 114px 13px / 1px 1px no-repeat, linear-gradient(90deg, #fff 109px, #e9eefb 109px); }
.spin { display: flex; width: 50px; height: 21px; border: 1px solid #adadad; background: #fff; font: 13px "Liberation Sans", Arial, sans-serif; color: #000; }
.spin input { width: 33px; padding-left: 5px; outline: 0; }
.spin > div { display: flex; flex-direction: column; gap: 1px; flex: 1; padding: 1px; }
.spin button { flex: 1; display: flex; align-items: center; justify-content: center; background: #f0f0f0; border: 1px solid #b0b0b0; }
.spin button svg { width: 6px; height: 3px; }
.scene { flex: 1; min-height: 0; width: 100%; }
.axes text { font: 11px Roboto, sans-serif; fill: #fff; }
.lt { font: 6px "DejaVu Sans", sans-serif; fill: #fff; }
.tick text { font: 4px "DejaVu Sans", sans-serif; fill: #e0e2ea; }
.scale { font: italic 700 9px "Liberation Sans", sans-serif; fill: #fff; text-shadow: 1px 1px #000; }
.biglogo { font: 700 48px "DejaVu Serif", serif; fill: #fff; }
.time { font: 700 10px "Liberation Mono", monospace; fill: #000; }
.status { height: 22px; background: #007acc; display: flex; justify-content: flex-end; align-items: flex-end; padding: 2px; flex: none; }
.status svg { width: 10px; height: 10px; }
```
FILE: scene.js
```js
// Draws the particle as nested superellipses coloured by a cool-to-warm map.
const map = [[59,76,192],[98,130,234],[141,176,254],[185,208,249],[221,221,221],[245,196,173],[244,152,122],[220,93,74],[180,4,38]];
const color = v => {
  const t = v * 8, i = Math.min(7, Math.floor(t)), f = t - i;
  return 'rgb(' + map[i].map((c, k) => Math.round(c + (map[i + 1][k] - c) * f)) + ')';
};
const outline = (r, n) => {
  const pts = [];
  for (let a = 0; a < 160; a++) {
    const t = a * Math.PI / 80, c = Math.cos(t), s = Math.sin(t);
    const x = Math.sign(c) * Math.pow(Math.abs(c), 2 / n) * r;
    const y = Math.sign(s) * Math.pow(Math.abs(s), 2 / n) * r;
    pts.push(x.toFixed(1) + ',' + y.toFixed(1));
  }
  return pts.join(' ');
};
const group = document.getElementById('particle');
for (let d = 18; d >= -26; d--) {
  const p = document.createElementNS('http://www.w3.org/2000/svg', 'polygon');
  p.setAttribute('points', outline(62 + d, 3.5));
  p.setAttribute('fill', color(0.5 * (1 + Math.tanh(d / (d < 0 ? 8 : 6)))));
  group.appendChild(p);
}
```
